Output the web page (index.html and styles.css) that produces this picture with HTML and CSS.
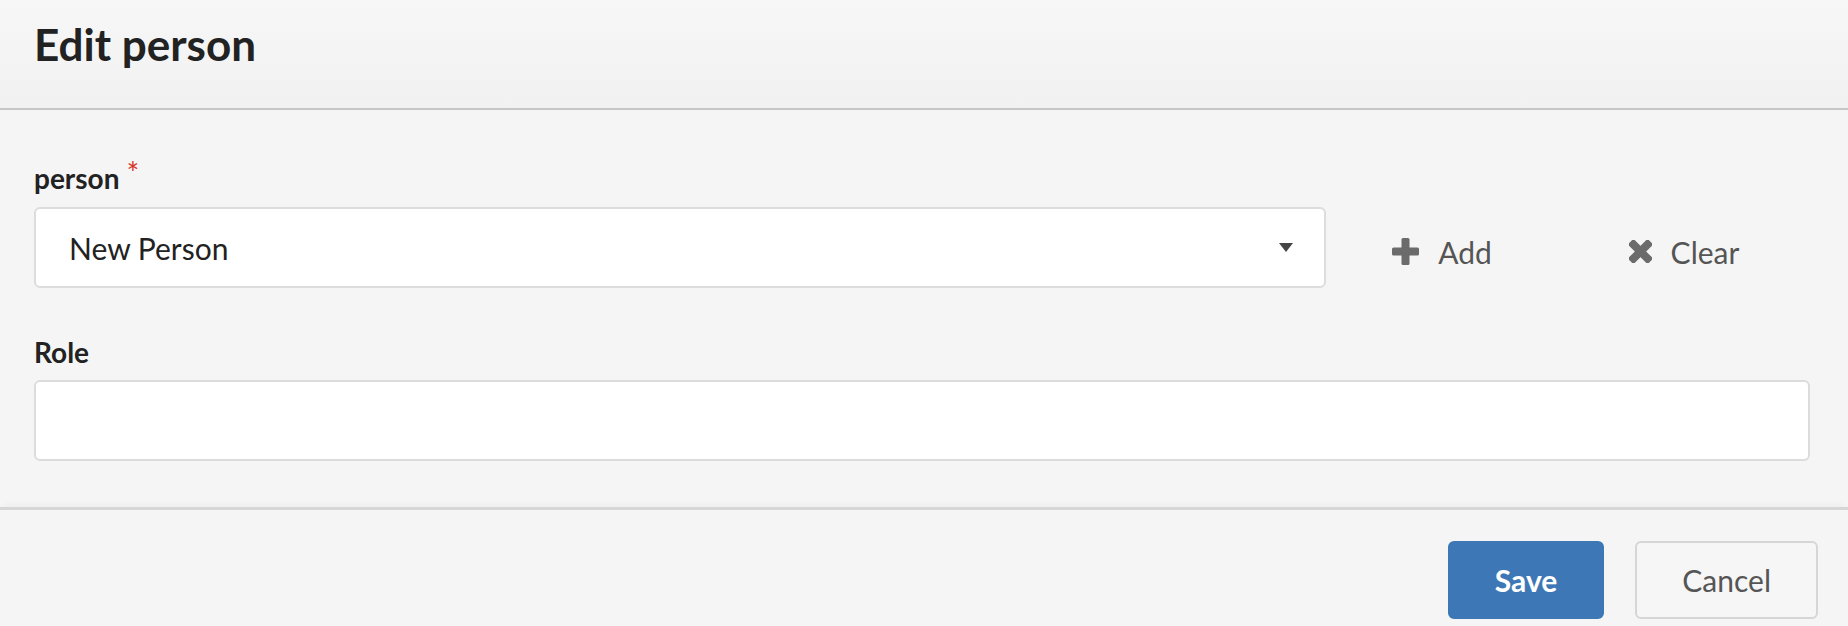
FILE: index.html
```html
<!DOCTYPE html>
<html lang="en">
<head>
  <meta charset="UTF-8">
  <title>Edit person</title>
  <link rel="stylesheet" href="styles.css">
</head>
<body>
  <div class="modal">
    <!-- Header -->
    <header class="modal-header">
      <h1>Edit person</h1>
    </header>

    <!-- Form -->
    <div class="modal-body">
      <div class="field">
        <label class="field-label">person<span class="required">*</span></label>
        <div class="field-row">
          <div class="select">
            <span class="select-value">New Person</span>
            <span class="caret"></span>
          </div>
          <button class="link-btn">
            <svg class="icon" width="27" height="27" viewBox="0 0 27 27">
              <rect x="9.5" y="0" width="8" height="27" rx="1.5"/>
              <rect x="0" y="9.5" width="27" height="8" rx="1.5"/>
            </svg>
            Add
          </button>
          <button class="link-btn">
            <svg class="icon" width="23" height="23" viewBox="0 0 23 23">
              <rect x="7.5" y="-2.5" width="8" height="28" rx="1.5" transform="rotate(45 11.5 11.5)"/>
              <rect x="7.5" y="-2.5" width="8" height="28" rx="1.5" transform="rotate(-45 11.5 11.5)"/>
            </svg>
            Clear
          </button>
        </div>
      </div>

      <div class="field">
        <label class="field-label">Role</label>
        <input class="text-input" type="text">
      </div>
    </div>

    <!-- Footer -->
    <footer class="modal-footer">
      <button class="btn btn-primary">Save</button>
      <button class="btn btn-default">Cancel</button>
    </footer>
  </div>
</body>
</html>
```

FILE: styles.css
```css
/* Global */
body {
  margin: 0;
  padding: 0;
  background: #f5f5f5;
  font-family: 'Lato', 'Open Sans', sans-serif;
  color: #222;
}
button {
  font-family: inherit;
  cursor: pointer;
}

/* Header */
.modal-header {
  height: 110px;
  box-sizing: border-box;
  padding: 18px 34px 0;
  background: linear-gradient(#f7f7f7, #f1f1f1);
  border-bottom: 2px solid #c6c6c6;
}
.modal-header h1 {
  margin: 0;
  font-size: 44px;
  line-height: 1.2;
  font-weight: 700;
  color: #222;
}

/* Body */
.modal-body {
  padding: 51px 38px 46px 34px;
}
.field + .field {
  margin-top: 47px;
}
.field-label {
  display: block;
  height: 34px;
  font-size: 28px;
  font-weight: 700;
  line-height: 34px;
  margin-bottom: 12px;
}
.field + .field .field-label {
  margin-bottom: 11px;
}
.required {
  color: #d9342b;
  font-size: 30px;
  font-weight: 400;
  line-height: 0;
  margin-left: 7px;
  vertical-align: 5px;
}
.field-row {
  display: flex;
  align-items: center;
}
.select {
  flex: 1;
  height: 81px;
  box-sizing: border-box;
  display: flex;
  align-items: center;
  justify-content: space-between;
  padding: 0 31px 0 33px;
  background: #fff;
  border: 2px solid #dcdcdc;
  border-radius: 6px;
}
.select-value {
  font-size: 30px;
  color: #222;
}
.caret {
  width: 0;
  height: 0;
  border-left: 7.5px solid transparent;
  border-right: 7.5px solid transparent;
  border-top: 9px solid #444;
}
.link-btn {
  width: 242px;
  display: flex;
  align-items: center;
  justify-content: center;
  gap: 19px;
  padding: 8px 10px 0 0;
  background: none;
  border: none;
  font-size: 30px;
  color: #555;
}
.icon {
  fill: #6b6b6b;
  flex: none;
}
.text-input {
  display: block;
  width: 100%;
  height: 81px;
  box-sizing: border-box;
  background: #fff;
  border: 2px solid #dcdcdc;
  border-radius: 6px;
  font-family: inherit;
  font-size: 30px;
  padding: 0 33px;
}

/* Footer */
.modal-footer {
  display: flex;
  justify-content: flex-end;
  gap: 31px;
  padding: 31px 30px 0;
  border-top: 3px solid #d6d6d6;
  box-shadow: 0 -6px 8px -4px rgba(0, 0, 0, 0.04);
}
.btn {
  height: 78px;
  box-sizing: border-box;
  padding: 0 45px;
  font-size: 30px;
  border-radius: 6px;
}
.btn-primary {
  background: #3d77b6;
  border: 2px solid #3d77b6;
  color: #fff;
  font-weight: 700;
}
.btn-default {
  background: #f6f6f6;
  border: 2px solid #d6d6d6;
  color: #555;
}
```
